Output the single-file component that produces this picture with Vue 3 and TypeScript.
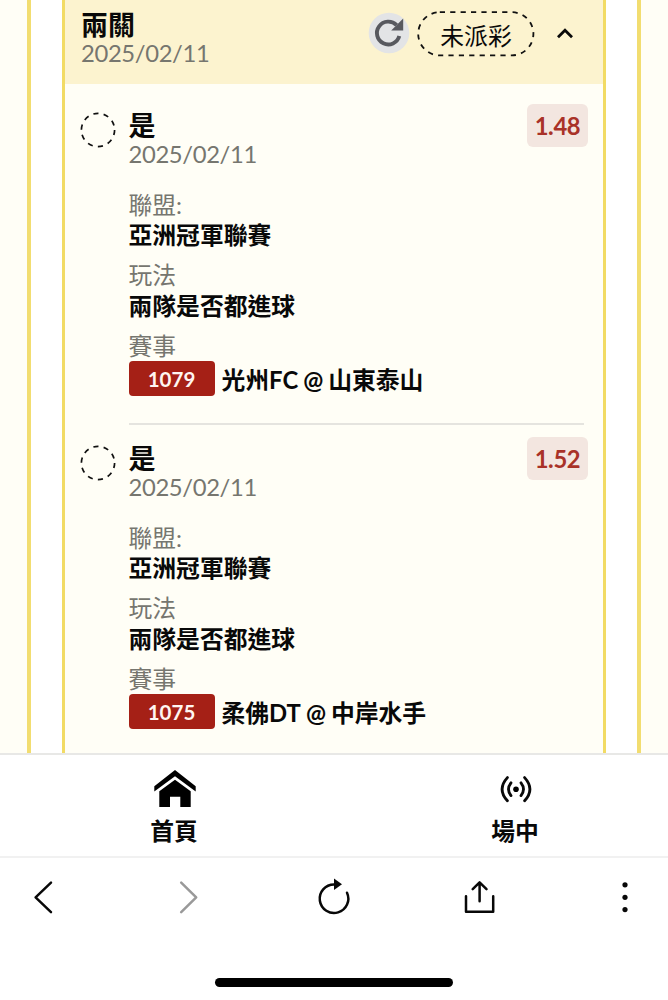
<script setup lang="ts">
interface Leg {
  pick: string
  date: string
  odds: string
  league: string
  market: string
  code: string
  home: string
  away: string
}

const legs: Leg[] = [
  { pick: '是', date: '2025/02/11', odds: '1.48', league: '亞洲冠軍聯賽', market: '兩隊是否都進球', code: '1079', home: '光州FC', away: '山東泰山' },
  { pick: '是', date: '2025/02/11', odds: '1.52', league: '亞洲冠軍聯賽', market: '兩隊是否都進球', code: '1075', home: '柔佛DT', away: '中岸水手' },
]
</script>

<template>
  <div class="screen">
    <main class="page">
      <div class="panel">
        <section class="ticket">
          <header class="ticket-head">
            <div class="ticket-title">
              <h2>兩關</h2>
              <p class="date">2025/02/11</p>
            </div>
            <svg class="refresh" viewBox="0 0 42 42">
              <circle cx="21" cy="21" r="20.3" fill="#e3e4e6" />
              <path d="M31.3 24.1A11.4 11.4 0 1 1 28.6 13.2" fill="none" stroke="#58595f" stroke-width="3.9" />
              <path d="M35.2 6.6V18.6H23.2Z" fill="#58595f" />
            </svg>
            <div class="status">
              <svg viewBox="0 0 118 46">
                <rect x="1.2" y="1.2" width="115.2" height="43.2" rx="21.6" />
              </svg>
              <span>未派彩</span>
            </div>
            <svg class="caret" viewBox="0 0 18 12"><path d="M2 10.2L9 3.2L16 10.2" /></svg>
          </header>
          <article v-for="leg in legs" :key="leg.code" class="leg">
            <svg class="pending" viewBox="0 0 36 36"><circle cx="18" cy="18" r="16.6" /></svg>
            <div class="details">
              <div class="leg-head">
                <div>
                  <h3>{{ leg.pick }}</h3>
                  <p class="date">{{ leg.date }}</p>
                </div>
                <span class="odds">{{ leg.odds }}</span>
              </div>
              <dl>
                <div class="field"><dt>聯盟:</dt><dd>{{ leg.league }}</dd></div>
                <div class="field"><dt>玩法</dt><dd>{{ leg.market }}</dd></div>
                <div class="field">
                  <dt>賽事</dt>
                  <dd class="match">
                    <span class="code">{{ leg.code }}</span>
                    <span class="teams">{{ leg.home }}<i>@</i>{{ leg.away }}</span>
                  </dd>
                </div>
              </dl>
            </div>
          </article>
        </section>
      </div>
    </main>

    <nav class="tabs">
      <a class="tab">
        <svg viewBox="0 0 44 40">
          <path d="M1.3 17.2L22 1L42.7 17.2V22.6L22 7.2L1.3 22.6Z" />
          <path d="M6.3 22.3L22 10.8L37.7 22.3V38H27.3V27.8H17V38H6.3Z" />
        </svg>
        <span>首頁</span>
      </a>
      <a class="tab">
        <svg class="live" viewBox="0 0 44 40">
          <circle cx="22" cy="20.2" r="2.8" />
          <path d="M17 13.8Q12 20.2 17 26.6M27 13.8Q32 20.2 27 26.6M13.4 8.6Q2.8 20.2 13.4 31.8M30.6 8.6Q41.2 20.2 30.6 31.8" />
        </svg>
        <span>場中</span>
      </a>
    </nav>

    <footer class="browser">
      <div class="tools">
        <svg viewBox="0 0 36 36"><path d="M26 3.7L10.6 18.4L26 33.1" /></svg>
        <svg class="muted" viewBox="0 0 36 36"><path d="M10.2 3.7L25.2 18.4L10.2 33.1" /></svg>
        <svg viewBox="0 0 36 36">
          <path d="M31 13.7A14.3 14.3 0 1 1 18 5.4" />
          <path d="M18 -0.6L26 5.2L18 11Z" class="solid" />
        </svg>
        <svg viewBox="0 0 36 36"><path d="M4 17.2V32.8H31.2V17.2M17.6 22.2V3.5M10.7 10.2L17.6 3.3L24.5 10.2" /></svg>
        <svg viewBox="0 0 36 36" class="dots"><circle cx="18" cy="5.8" r="2.6" /><circle cx="18" cy="18.3" r="2.6" /><circle cx="18" cy="30.6" r="2.6" /></svg>
      </div>
      <div class="home-bar"></div>
    </footer>
  </div>
</template>

<style>
body {
  margin: 0;
  overflow: hidden;
}
</style>

<style scoped>
* {
  box-sizing: border-box;
}

h2,
h3,
p,
dl,
dd {
  margin: 0;
}

.screen {
  height: 1000px;
  display: flex;
  flex-direction: column;
  background: #fff;
  color: #090909;
  font-family: Lato, 'Noto Sans CJK TC', sans-serif;
  font-size: 23.8px;
}

.page {
  height: 753px;
  padding: 0 27px;
  background: #fffef6;
  overflow: hidden;
}

.panel {
  height: 753px;
  padding: 0 31px;
  border: solid #f2dd70;
  border-width: 0 4px;
  background: #fff;
}

.ticket {
  height: 753px;
  border: solid #f2db64;
  border-width: 0 3px;
  background: #fffef6;
}

.ticket-head {
  height: 84px;
  padding: 11px 29px 0 16px;
  display: flex;
  align-items: flex-start;
  background: #fcf3cf;
}

.ticket-title {
  flex: 1;
}

h2,
h3 {
  height: 28px;
  font-size: 27px;
  line-height: 28px;
  font-weight: 700;
}

.date {
  height: 28px;
  line-height: 29px;
  letter-spacing: -0.35px;
  color: #76766f;
}

.refresh {
  width: 42px;
  height: 42px;
  margin: 1px 7px 0 0;
}

.status {
  position: relative;
  width: 118px;
  height: 46px;
  display: grid;
  place-items: center;
}

.status svg {
  position: absolute;
  inset: 0;
}

.status rect {
  fill: none;
  stroke: #111;
  stroke-width: 1.8;
  stroke-dasharray: 5.2 5.2;
}

.caret {
  width: 18px;
  height: 12px;
  margin: 16px 0 0 21px;
  fill: none;
  stroke: #090909;
  stroke-width: 2.8;
}

.leg {
  height: 333px;
  display: flex;
  padding: 28px 15px 0 14.5px;
}

.pending {
  flex: none;
  width: 36px;
  height: 36px;
  margin: 0 13px 0 0;
  fill: none;
  stroke: #111;
  stroke-width: 1.7;
  stroke-dasharray: 5.2 5.23;
}

.details {
  flex: 1;
}

.leg:not(:last-child) .details {
  height: 313px;
  background: linear-gradient(#e5e4df, #e5e4df) left bottom / 455px 2px no-repeat;
}

.leg-head {
  display: flex;
  justify-content: space-between;
  height: 79px;
}

.odds {
  width: 61px;
  height: 43px;
  margin-top: -8px;
  border-radius: 6px;
  background: #f3e6e0;
  color: #a93228;
  font-weight: 700;
  letter-spacing: -0.35px;
  line-height: 45px;
  text-align: center;
}

dl {
  display: grid;
  gap: 11.7px;
}

.field {
  height: 58.6px;
}

dt {
  line-height: 29.3px;
  height: 29.3px;
  color: #76766f;
}

dd {
  line-height: 31px;
  height: 29.3px;
  font-weight: 700;
}

.match {
  height: 35px;
  display: flex;
  gap: 7px;
  line-height: 38px;
}

.code {
  width: 86px;
  height: 35px;
  border-radius: 4px;
  background: #a52016;
  color: #fff5f1;
  font-size: 20.5px;
  line-height: 36px;
  text-align: center;
}

.teams {
  white-space: nowrap;
}

i {
  margin: 0 5px;
  font-style: normal;
}

.tabs {
  height: 103px;
  display: flex;
  border-top: 2px solid #e8e8e6;
}

.tab {
  width: 341px;
  flex: none;
  padding: 14px 0 0 8px;
  display: flex;
  flex-direction: column;
  align-items: center;
  font-weight: 700;
  line-height: 32px;
}

.tab svg {
  width: 44px;
  height: 40px;
  margin-bottom: 6px;
}

.tab span {
  margin-left: -1px;
}

.live path {
  fill: none;
  stroke: #090909;
  stroke-width: 2.8;
  stroke-linecap: round;
}

.browser {
  height: 144px;
  border-top: 2px solid #f1f1f1;
}

.tools {
  display: flex;
  justify-content: space-between;
  padding: 21px 25px 0;
}

.tools svg {
  width: 36px;
  height: 36px;
  overflow: visible;
  fill: none;
  stroke: #080808;
  stroke-width: 2.5;
  stroke-linecap: round;
  stroke-linejoin: round;
}

.tools .muted {
  stroke: #999;
}

.tools .solid,
.tools .dots {
  fill: #080808;
  stroke: none;
}

.home-bar {
  width: 238px;
  height: 9px;
  margin: 63px auto 0;
  border-radius: 5px;
  background: #000;
}
</style>
